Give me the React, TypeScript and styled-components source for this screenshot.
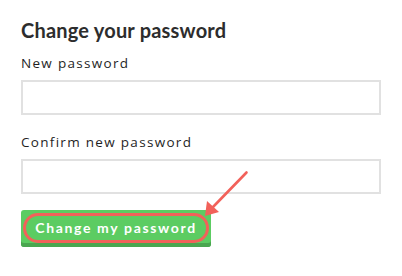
import React from "react";
import styled, { createGlobalStyle } from "styled-components";

const Global = createGlobalStyle`
  html, body { margin: 0; padding: 0; background: #ffffff; }
  body { font-family: Lato, "Open Sans", sans-serif; }
`;

const Page = styled.div`
  position: relative;
  width: 402px;
  height: 276px;
  box-sizing: border-box;
  padding: 18px 21px 0 21px;
  display: flex;
  flex-direction: column;
`;

const Title = styled.h1`
  margin: 0;
  font-family: Lato, sans-serif;
  font-weight: 700;
  font-size: 20px;
  line-height: 24px;
  color: #2d2d2d;
  letter-spacing: 0.2px;
`;

const Field = styled.div<{ $top: number }>`
  display: flex;
  flex-direction: column;
  margin-top: ${(p) => p.$top}px;
`;

const Label = styled.label`
  font-family: "Open Sans", sans-serif;
  font-size: 13.5px;
  line-height: 18px;
  color: #1f1f1f;
  letter-spacing: 1.3px;
  margin-bottom: 8px;
`;

const Input = styled.input`
  box-sizing: border-box;
  width: 360px;
  height: 35px;
  border: 2px solid #e1e1e1;
  border-radius: 0;
  background: #fff;
  outline: none;
  padding: 0 10px;
`;

const ButtonWrap = styled.div`
  position: relative;
  margin-top: 16px;
  width: 190px;
`;

const Button = styled.button`
  box-sizing: border-box;
  width: 190px;
  height: 37px;
  border: none;
  border-radius: 3px;
  background: #5ccc62;
  box-shadow: inset 0 -4px 0 #4aa650;
  color: #ffffff;
  font-family: Lato, sans-serif;
  font-weight: 700;
  font-size: 14px;
  letter-spacing: 1.65px;
  padding: 0 0 3px 0;
  cursor: pointer;
`;

const Highlight = styled.div`
  position: absolute;
  left: 2px;
  top: 3px;
  width: 186px;
  height: 30px;
  box-sizing: border-box;
  border: 3px solid #f2615a;
  border-radius: 15px;
  pointer-events: none;
`;

const Arrow = styled.svg`
  position: absolute;
  left: 0;
  top: 0;
  pointer-events: none;
`;

export default function App() {
  return (
    <>
      <Global />
      <Page>
        <Title>Change your password</Title>
        <Field $top={12}>
          <Label>New password</Label>
          <Input type="password" />
        </Field>
        <Field $top={18}>
          <Label>Confirm new password</Label>
          <Input type="password" />
        </Field>
        <ButtonWrap>
          <Button>Change my password</Button>
          <Highlight />
        </ButtonWrap>
        <Arrow width="402" height="276" viewBox="0 0 402 276">
          <line x1="246.5" y1="172.5" x2="213" y2="207" stroke="#f2615a" strokeWidth="2.6" strokeLinecap="round" />
          <polygon points="205,216 207,201 219,212" fill="#f2615a" />
        </Arrow>
      </Page>
    </>
  );
}
